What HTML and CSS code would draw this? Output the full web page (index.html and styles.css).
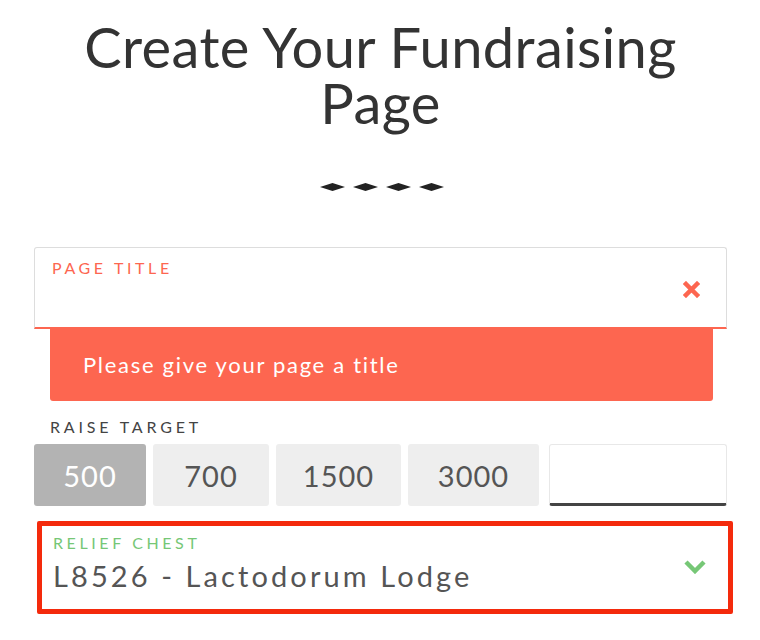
FILE: index.html
```html
<!DOCTYPE html>
<html lang="en">
<head>
    <meta charset="UTF-8">
    <meta name="viewport" content="width=device-width, initial-scale=1.0">
    <title>Create Your Fundraising Page</title>
    <link rel="stylesheet" href="styles.css">
</head>
<body>
    <div class="page">
        <h1 class="title">Create Your Fundraising Page</h1>

        <div class="divider">
            <svg width="25" height="8" viewBox="0 0 25 8"><polygon points="0,4 12.5,0 25,4 12.5,8" fill="#222"/></svg>
            <svg width="25" height="8" viewBox="0 0 25 8"><polygon points="0,4 12.5,0 25,4 12.5,8" fill="#222"/></svg>
            <svg width="25" height="8" viewBox="0 0 25 8"><polygon points="0,4 12.5,0 25,4 12.5,8" fill="#222"/></svg>
            <svg width="25" height="8" viewBox="0 0 25 8"><polygon points="0,4 12.5,0 25,4 12.5,8" fill="#222"/></svg>
        </div>

        <div class="field field-error">
            <label for="pageTitle">Page Title</label>
            <input type="text" id="pageTitle">
            <svg class="field-icon" width="17" height="17" viewBox="0 0 17 17">
                <path d="M3 3 L14 14 M14 3 L3 14" stroke="#fd6650" stroke-width="4.5" stroke-linecap="square"/>
            </svg>
        </div>
        <div class="error-msg">Please give your page a title</div>

        <div class="section-label">Raise Target</div>
        <div class="amounts">
            <button class="amount selected">500</button>
            <button class="amount">700</button>
            <button class="amount">1500</button>
            <button class="amount">3000</button>
            <input type="text" class="amount-other">
        </div>

        <div class="highlight">
            <div class="field field-valid">
                <label>Relief Chest</label>
                <div class="field-value">L8526 - Lactodorum Lodge</div>
                <svg class="field-icon" width="24" height="15" viewBox="0 0 24 15">
                    <path d="M3 3 L12 12 L21 3" fill="none" stroke="#76c776" stroke-width="4.5"/>
                </svg>
            </div>
        </div>
    </div>
</body>
</html>
```

FILE: styles.css
```css
body {
    margin: 0;
    font-family: 'Lato', 'Open Sans', sans-serif;
    background: #fff;
    color: #555;
}
.page {
    padding: 0 33px 0 34px;
}
.title {
    font-size: 56px;
    font-weight: 400;
    line-height: 56px;
    letter-spacing: 0.4px;
    color: #333;
    text-align: center;
    margin: 19px 0 0;
    padding: 0 40px;
}
.divider {
    display: flex;
    justify-content: center;
    gap: 8px;
    margin: 52px 0 0 2px;
    height: 8px;
}
.divider svg {
    display: block;
}
.field {
    position: relative;
    box-sizing: border-box;
    border: 1px solid #ddd;
    border-radius: 3px;
    background: #fff;
}
.field label {
    display: block;
    font-size: 16px;
    letter-spacing: 3.6px;
    text-transform: uppercase;
}
.field-error {
    margin-top: 56px;
    height: 82px;
    padding: 10px 17px 0;
    border-bottom: 2px solid #fd6650;
    border-radius: 3px 3px 0 0;
}
.field-error label {
    color: #fd6650;
}
.field input {
    border: none;
    outline: none;
    width: 90%;
    font-family: inherit;
    font-size: 22px;
    padding: 6px 0;
}
.field-icon {
    position: absolute;
    right: 26px;
    top: 33px;
}
.error-msg {
    margin: 0 14px 0 16px;
    height: 72px;
    box-sizing: border-box;
    padding: 22px 33px 0;
    background: #fd6650;
    color: #fff;
    font-size: 22px;
    letter-spacing: 1.7px;
    border-radius: 0 0 3px 3px;
}
.section-label {
    margin: 16px 0 0 16px;
    font-size: 16px;
    letter-spacing: 3.8px;
    text-transform: uppercase;
    color: #444;
}
.amounts {
    display: grid;
    grid-template-columns: 112px 116px 125px 131px minmax(0, 1fr);
    column-gap: 7px;
    margin-top: 8px;
    height: 62px;
}
.amount {
    border: none;
    border-radius: 3px;
    background: #eee;
    color: #555;
    font-family: inherit;
    font-size: 29px;
    letter-spacing: 1px;
    padding: 0;
    cursor: pointer;
}
.amount.selected {
    background: #b3b3b3;
    color: #fff;
}
.amount-other {
    box-sizing: border-box;
    width: auto;
    min-width: 0;
    margin-left: 3px;
    border: 1px solid #e8e8e8;
    border-bottom: 3px solid #444;
    border-radius: 3px;
    outline: none;
    font-family: inherit;
    font-size: 22px;
}
.highlight {
    margin: 15px -6px 0 3px;
    border: 5px solid #f42a0c;
    border-radius: 2px;
}
.field-valid {
    border: none;
    height: 83px;
    padding: 7px 0 0 11px;
}
.field-valid label {
    color: #76c776;
}
.field-value {
    margin-top: 6px;
    font-size: 29px;
    letter-spacing: 3.1px;
    color: #555;
}
.field-valid .field-icon {
    right: 21px;
    top: 33px;
}
```
